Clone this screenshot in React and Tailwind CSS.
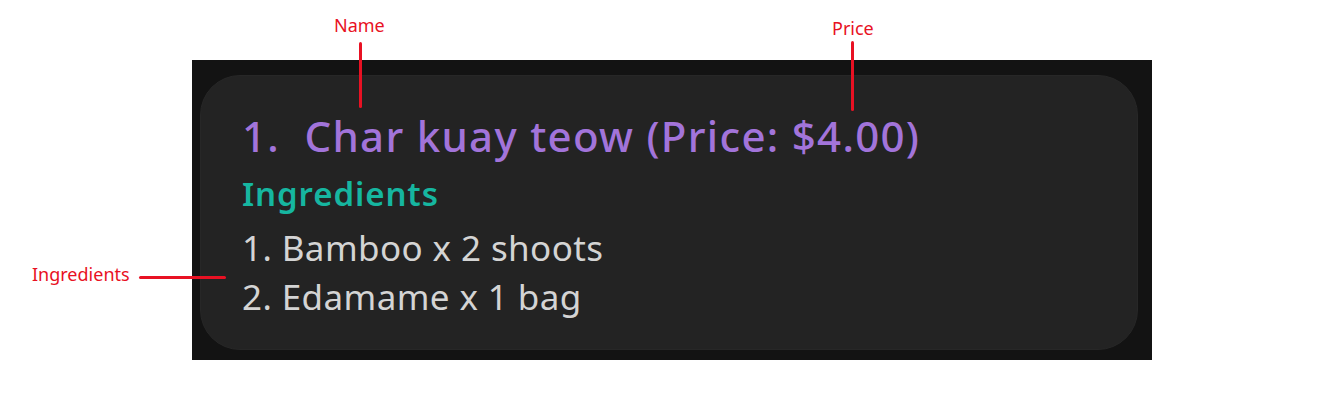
export default function App() {
  const ingredients = ['Bamboo x 2 shoots', 'Edamame x 1 bag'];

  return (
    <div className="relative w-[1344px] h-[420px] bg-white pt-[60px] pl-[192px]" style={{ fontFamily: '"Noto Sans", "Open Sans", sans-serif' }}>
      {/* red annotation callouts over the screenshot */}
      <div className="absolute inset-0 pointer-events-none z-10 text-[#e81123] text-[18px]">
        <div className="absolute left-[334px] top-[13px] leading-[24px]">Name</div>
        <div className="absolute left-[359px] top-[42px] w-[3px] h-[66px] rounded-full bg-[#e81123]" />
        <div className="absolute left-[832px] top-[16px] leading-[24px]">Price</div>
        <div className="absolute left-[851px] top-[41px] w-[3px] h-[70px] rounded-full bg-[#e81123]" />
        <div className="absolute left-[32px] top-[262px] leading-[24px]">Ingredients</div>
        <div className="absolute left-[139px] top-[276px] w-[87px] h-[3px] rounded-full bg-[#e81123]" />
      </div>

      <div className="flex w-[960px] h-[300px] bg-[#131313] pt-[15px] pl-[8px] pr-[14px] pb-[10px]">
        <div className="flex flex-col flex-1 rounded-[40px] bg-[#232323] border border-[#272727] pl-[41px] pt-[35px]">
          <div className="text-[42px] font-medium leading-[50px] text-[#a274da] whitespace-pre tracking-[1.3px]">
            1.  Char kuay teow (Price: $4.00)
          </div>
          <div className="text-[33px] font-semibold leading-[44px] text-[#16b6a0] mt-[11px] tracking-[0.9px]">Ingredients</div>
          <div className="flex flex-col text-[35px] leading-[49px] text-[#d4d4d4] mt-[7px] tracking-[0.4px]">
            {ingredients.map((item, i) => (
              <div key={item}>{i + 1}. {item}</div>
            ))}
          </div>
        </div>
      </div>
    </div>
  );
}
